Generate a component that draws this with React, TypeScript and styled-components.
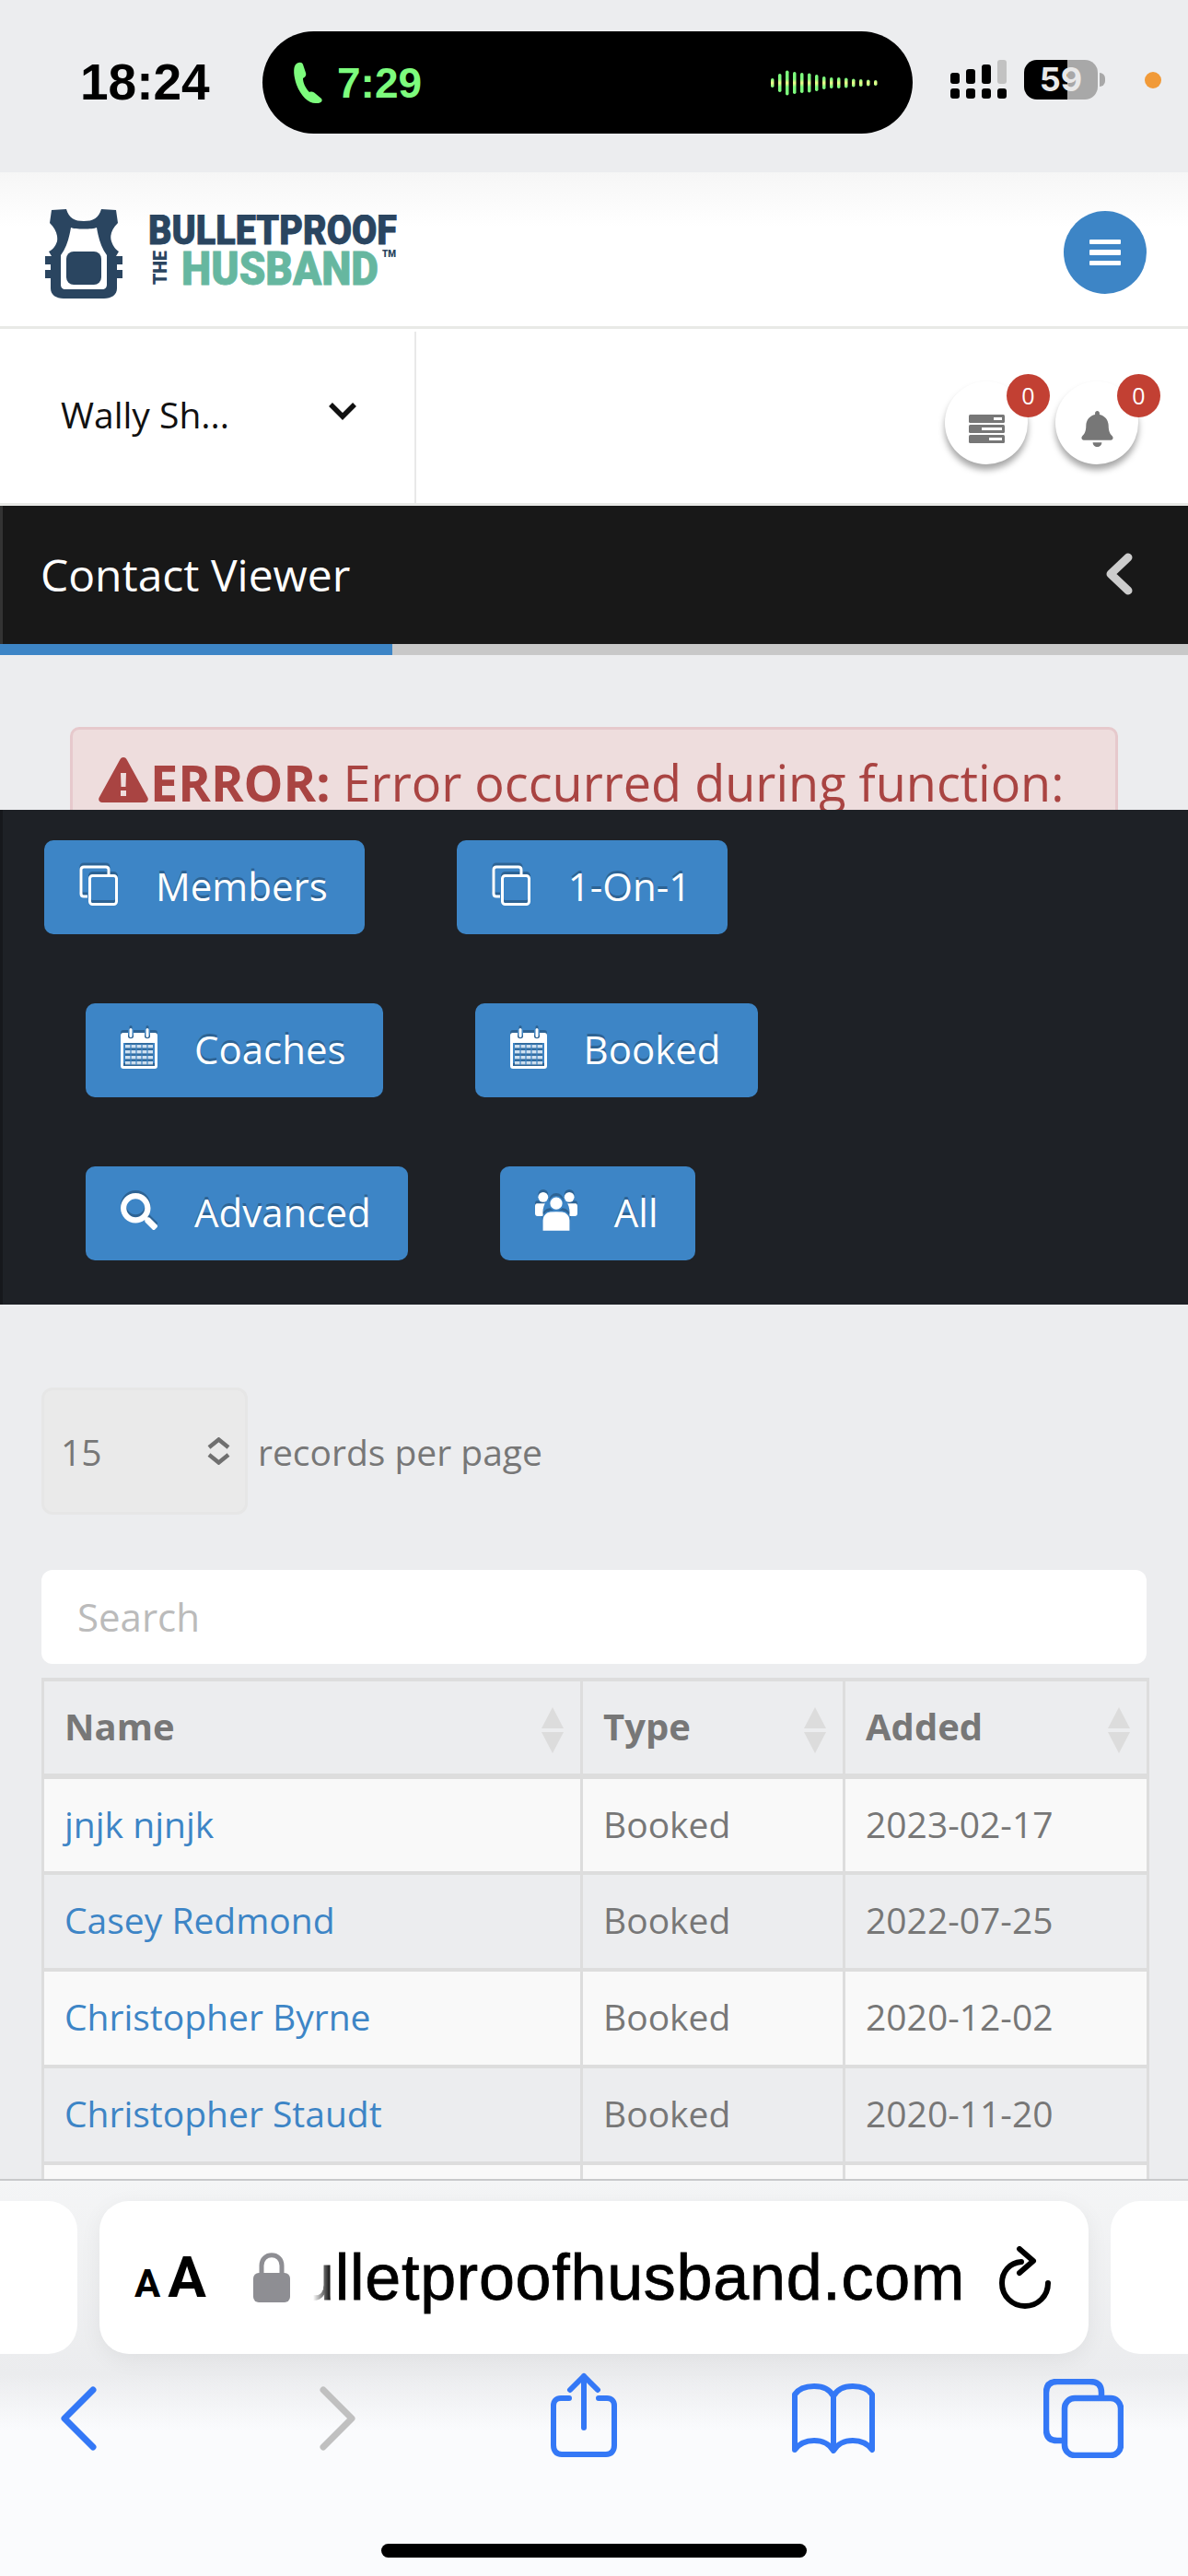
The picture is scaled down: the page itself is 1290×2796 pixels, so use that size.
import React from 'react';
import styled, { createGlobalStyle } from 'styled-components';
import { FaBell, FaSearch } from 'react-icons/fa';

const GlobalStyle = createGlobalStyle`
  html, body { margin: 0; padding: 0; background: #ecedef; }
  * { box-sizing: border-box; }
`;

const Page = styled.div`
  width: 1290px;
  height: 2796px;
  display: flex;
  flex-direction: column;
  overflow: hidden;
  background: #ecedef;
  font-family: 'Open Sans', 'Liberation Sans', sans-serif;
`;

/* ---- iOS status bar ---- */
const StatusBar = styled.div`
  height: 187px;
  flex: none;
  display: flex;
  align-items: flex-start;
  padding: 34px 0 0 87px;
  font-family: 'Liberation Sans', Arial, sans-serif;
`;
const Clock = styled.div`
  width: 198px;
  margin-top: 26px;
  font-size: 55px;
  line-height: 58px;
  font-weight: 700;
  color: #000;
`;
const Island = styled.div`
  width: 706px;
  height: 111px;
  border-radius: 56px;
  background: #000;
  display: flex;
  align-items: center;
  padding: 0 38px 0 33px;
  color: #7dfc7d;
`;
const CallTime = styled.span`
  margin-left: 14px;
  font-size: 46px;
  font-weight: 700;
  flex: 1;
`;
const Signal = styled.div`
  margin: 31px 0 0 41px;
  flex: none;
  height: 43px;
  svg { display: block; }
`;
const Battery = styled.div`
  position: relative;
  margin: 31px 0 0 18px;
  width: 80px;
  height: 43px;
  border-radius: 14px;
  background: linear-gradient(90deg, #000 0 47px, #a8a8a8 47px);
  color: #e9e9e9;
  font-size: 36px;
  line-height: 43px;
  font-weight: 700;
  text-align: center;
  font-family: 'Inter', 'Liberation Sans', sans-serif;
  &::after {
    content: '';
    position: absolute;
    left: 82px;
    top: 14px;
    width: 6px;
    height: 15px;
    border-radius: 0 8px 8px 0;
    background: #a8a8a8;
  }
`;
const OrangeDot = styled.div`
  margin: 44px 0 0 51px;
  width: 18px;
  height: 18px;
  border-radius: 50%;
  background: #f19a38;
`;

/* ---- site header ---- */
const Header = styled.header`
  height: 170px;
  flex: none;
  display: flex;
  align-items: flex-start;
  justify-content: space-between;
  padding: 40px 45px 0 48px;
  background: linear-gradient(#f6f6f6, #fff 60px);
  border-bottom: 3px solid #e8e9e6;
`;
const MenuButton = styled.div`
  width: 90px;
  height: 90px;
  margin-top: 2px;
  border-radius: 50%;
  background: #3d85c6;
  display: flex;
  flex-direction: column;
  align-items: center;
  justify-content: center;
  gap: 6px;
  span {
    width: 34px;
    height: 5.5px;
    border-radius: 1px;
    background: #fff;
  }
`;

const SubNav = styled.div`
  height: 192px;
  flex: none;
  display: flex;
  background: #fff;
  border-bottom: 3px solid #e8e9e6;
  padding-top: 3px;
`;
const UserMenu = styled.div`
  width: 452px;
  border-right: 2px solid #e9e9e9;
  display: flex;
  align-items: flex-start;
  padding: 64px 0 0 66px;
  font-size: 39px;
  line-height: 52px;
  color: #111;
  span { width: 291px; }
  svg { margin-top: 12px; }
`;
const Notices = styled.div`
  flex: 1;
  display: flex;
  justify-content: flex-end;
  gap: 30px;
  padding: 54px 54px 0 0;
`;
const RoundIcon = styled.div`
  position: relative;
  width: 90px;
  height: 90px;
  border-radius: 50%;
  background: #fff;
  box-shadow: 0 6px 7px rgba(0, 0, 0, 0.35);
  display: flex;
  align-items: center;
  justify-content: center;
  color: #777;
  padding-top: 12px;
`;
const Badge = styled.span`
  position: absolute;
  left: 67px;
  top: -8px;
  width: 47px;
  height: 47px;
  border-radius: 50%;
  background: #c24033;
  color: #fff;
  font-size: 25px;
  line-height: 47px;
  text-align: center;
`;

/* ---- page title ---- */
const TitleBar = styled.div`
  height: 150px;
  flex: none;
  display: flex;
  align-items: center;
  justify-content: space-between;
  padding: 0 60px 2px 41px;
  background: #181818;
  border-left: 3px solid #333;
  color: #fff;
  font-size: 48px;
`;
const Progress = styled.div`
  height: 12px;
  flex: none;
  background: #c8c8c8;
  div { height: 100%; background: #3d85c6; }
`;

const AlertArea = styled.div`
  height: 168px;
  flex: none;
  overflow: hidden;
  padding: 78px 76px 0;
`;
const Alert = styled.div`
  height: 140px;
  padding: 22px 26px;
  display: flex;
  align-items: flex-start;
  border: 3px solid #e6c9cc;
  border-radius: 10px;
  background: #eedddd;
  color: #a94442;
  font-size: 54px;
  line-height: 70px;
  white-space: nowrap;
  b { margin-right: 14px; }
  svg { flex: none; margin: 8px 2px 0 2px; }
`;

/* ---- dark button panel ---- */
const ButtonPanel = styled.div`
  height: 537px;
  flex: none;
  padding-top: 33px;
  display: flex;
  flex-direction: column;
  gap: 75px;
  background: #1e2126;
  border-left: 3px solid #16181c;
`;
const ButtonRow = styled.div<{ $indent: number }>`
  display: flex;
  gap: 100px;
  padding-left: ${({ $indent }) => $indent}px;
`;
const ActionButton = styled.div`
  height: 102px;
  display: flex;
  align-items: center;
  gap: 40px;
  padding: 0 40px 4px 38px;
  border-radius: 10px;
  background: #3d85c6;
  color: #fff;
  font-size: 42px;
  text-shadow: 0 -3px 0 rgba(0, 0, 0, 0.25);
  svg { flex: none; filter: drop-shadow(0 -3px 0 rgba(0, 0, 0, 0.25)); }
`;

/* ---- contacts table ---- */
const Main = styled.main`
  flex: 1;
  min-height: 0;
  overflow: hidden;
  padding: 90px 42px 0 45px;
  color: #777;
  font-size: 39px;
`;
const LengthRow = styled.div`
  display: flex;
  align-items: center;
  gap: 11px;
`;
const PageSize = styled.div`
  width: 224px;
  height: 138px;
  display: flex;
  align-items: center;
  justify-content: space-between;
  padding: 0 15px 0 18px;
  border: 3px solid #e6e6e6;
  border-radius: 12px;
  background: #eaeaea;
`;
const SearchBox = styled.div`
  height: 102px;
  margin: 60px 3px 15px 0;
  padding: 0 39px 2px;
  display: flex;
  align-items: center;
  border-radius: 12px;
  background: #fff;
  color: #bbb;
  font-size: 42px;
`;
const Table = styled.table`
  width: 1203px;
  table-layout: fixed;
  border-collapse: collapse;
  border: 3px solid #ddd;
  border-top-width: 4px;
`;
const Th = styled.th`
  position: relative;
  height: 105px;
  padding: 0 0 4px 22px;
  border: 3px solid #ddd;
  border-bottom-width: 6px;
  text-align: left;
  font-size: 40px;
  font-weight: 700;
  color: #777;
  &::before,
  &::after {
    content: '';
    position: absolute;
    right: 18px;
    border-left: 12px solid transparent;
    border-right: 12px solid transparent;
  }
  &::before { top: 28px; border-bottom: 23px solid #dcdcdc; }
  &::after { top: 55px; border-top: 23px solid #dcdcdc; }
`;
const Tr = styled.tr<{ $odd: boolean }>`
  background: ${({ $odd }) => ($odd ? '#f9f9f9' : '#ecedef')};
`;
const Td = styled.td`
  height: 105px;
  padding: 0 0 4px 22px;
  border: 3px solid #ddd;
  border-bottom-width: 4px;
  a { color: #3d85c6; text-decoration: none; }
`;

/* ---- Safari toolbar ---- */
const Toolbar = styled.div`
  height: 431px;
  flex: none;
  position: relative;
  border-top: 2px solid #c8c9cb;
  background: linear-gradient(#f4f5f6, #ebecee 210px, #fafbfd 270px);
  font-family: 'Liberation Sans', Arial, sans-serif;
`;
const Tabs = styled.div`
  height: 166px;
  margin-top: 22px;
  display: flex;
  gap: 24px;
  margin-left: -60px;
`;
const SideTab = styled.div`
  width: 144px;
  flex: none;
  border-radius: 32px;
  background: #fff;
`;
const AddressBar = styled.div`
  width: 1074px;
  flex: none;
  display: flex;
  align-items: center;
  padding: 0 41px 0 38px;
  border-radius: 32px;
  background: #fff;
  box-shadow: 0 6px 24px rgba(0, 0, 0, 0.06);
  color: #000;
`;
const FontToggle = styled.div`
  width: 129px;
  font-family: 'Roboto', 'Liberation Sans', sans-serif;
  font-weight: 700;
  font-size: 62px;
  line-height: 1;
  small { font-size: 42px; margin-right: 8px; }
`;
const Url = styled.div`
  width: 708px;
  margin-left: 25px;
  margin-right: 37px;
  overflow: hidden;
  display: flex;
  justify-content: flex-end;
  white-space: nowrap;
  font-size: 70px;
  line-height: 82px;
  letter-spacing: 0.75px;
  -webkit-text-stroke: 0.8px #000;
  mask-image: linear-gradient(90deg, transparent 0, #000 20px);
`;
const NavIcons = styled.div`
  display: grid;
  grid-template-columns: 282px 251px 262px 273px auto;
  align-items: center;
  height: 115px;
  padding-left: 65px;
  margin-top: 12px;
  svg:nth-child(3) { margin-bottom: 8px; }
`;
const HomeBar = styled.div`
  position: absolute;
  left: 414px;
  bottom: 20px;
  width: 462px;
  height: 15px;
  border-radius: 8px;
  background: #000;
`;

/* ---- drawn icons ---- */
const Vest = () => (
  <svg width="86" height="98" viewBox="0 0 86 98">
    <path
      fill="#2a4560"
      fillRule="evenodd"
      d="M8 1 L24 0 C27 10 33 13 43 13 C53 13 59 10 62 0 L78 1 L80 15 C73 22 71 29 73 35 C75 41 78 44 81 46 L78 51 L85 51 L85 60 L79 60 L79 66 L85 66 L85 75 L79 75 L79 86 C79 93 73 97 65 97 L21 97 C13 97 7 93 7 86 L7 75 L1 75 L1 66 L7 66 L7 60 L1 60 L1 51 L8 51 L5 46 C9 44 12 41 14 35 C15 29 13 22 6 15 Z M29 20 C33 22 53 22 57 20 C59 32 62 42 68 50 L68 82 C68 85 66 87 63 87 L23 87 C20 87 18 85 18 82 L18 50 C24 42 27 32 29 20 Z"
    />
    <rect x="24" y="46" width="38" height="36" rx="8" fill="#2a4560" />
  </svg>
);

const Wordmark = () => (
  <svg width="274" height="84" viewBox="0 0 274 84" fontFamily="Roboto, sans-serif" fontWeight="900">
    <text x="0" y="32" fontSize="45" fill="#2a4560" stroke="#2a4560" strokeWidth="0.8" textLength="270" lengthAdjust="spacingAndGlyphs">
      BULLETPROOF
    </text>
    <text x="36" y="76" fontSize="50" fill="#66b7a0" stroke="#66b7a0" strokeWidth="0.8" textLength="214" lengthAdjust="spacingAndGlyphs">
      HUSBAND
    </text>
    <text
      transform="translate(20 76) rotate(-90)"
      fontSize="21"
      fill="#2a4560"
      textLength="37"
      lengthAdjust="spacingAndGlyphs"
    >
      THE
    </text>
    <text x="254" y="46" fontSize="10" fill="#2a4560">
      TM
    </text>
  </svg>
);

const Logo = styled.div`
  display: flex;
  gap: 27px;
  align-items: flex-start;
  svg:last-child { margin-top: 6px; }
`;

const PhoneIcon = () => (
  <svg width="34" height="46" viewBox="0 0 34 46" fill="#7dfc7d">
    <path d="M3 3 C6 0 10 0 11 3 L14 12 C15 15 13 17 11 18 C11 23 14 29 18 33 C21 32 23 33 25 35 L31 40 C33 43 30 45 26 45 C18 46 9 38 4 25 C1 16 0 7 3 3 Z" />
  </svg>
);

const WAVE = [10, 20, 27, 24, 22, 21, 18, 14, 12, 12, 11, 9, 8, 7, 6];

const Waveform = () => (
  <svg width="116" height="30" viewBox="0 0 116 30">
    <defs>
      <linearGradient id="wave" x1="0" y1="0" x2="0" y2="30" gradientUnits="userSpaceOnUse">
        <stop offset="0.36" stopColor="#7dfc7d" />
        <stop offset="0.5" stopColor="#f4fb8a" />
        <stop offset="0.64" stopColor="#7dfc7d" />
      </linearGradient>
    </defs>
    {WAVE.map((h, i) => (
      <rect key={i} x={i * 8} y={15 - h / 2} width="3.5" height={h} rx="1.75" fill="url(#wave)" />
    ))}
  </svg>
);

const SignalBars = () => (
  <svg width="62" height="43" viewBox="0 0 62 43">
    <rect x="0" y="14" width="10" height="12" rx="3" />
    <rect x="17" y="10" width="10" height="16" rx="3" />
    <rect x="34" y="5" width="10" height="21" rx="3" />
    <rect x="51" y="0" width="10" height="26" rx="3" fill="#c2c2c2" />
    {[0, 17, 34, 51].map((x) => (
      <rect key={x} x={x} y="31" width="10" height="11" rx="3" />
    ))}
  </svg>
);

const Chevron = () => (
  <svg width="30" height="20" viewBox="0 0 30 20" fill="none" stroke="#111" strokeWidth="5.5">
    <path d="M2 3 L15 16 L28 3" />
  </svg>
);

const CollapseIcon = () => (
  <svg width="30" height="46" viewBox="0 0 30 46" fill="none" stroke="#ccc" strokeWidth="9" strokeLinecap="round" strokeLinejoin="round">
    <path d="M25 5 L6 23 L25 41" />
  </svg>
);

const ServerIcon = () => (
  <svg width="39" height="31" viewBox="0 0 39 31">
    {[0, 11, 22].map((y, i) => (
      <g key={y}>
        <rect y={y} width="39" height="9" rx="1.5" fill="#777" />
        <rect x={[27, 14, 22][i]} y={y + 3} width={[9, 22, 14][i]} height="3" fill="#fff" />
      </g>
    ))}
  </svg>
);

const WarnIcon = () => (
  <svg width="54" height="50" viewBox="0 0 54 50">
    <path
      fill="#a94442"
      fillRule="evenodd"
      d="M27 0 C29 0 30 1 31 3 L53 43 C55 46 53 49 50 49 L4 49 C1 49 -1 46 1 43 L23 3 C24 1 25 0 27 0 Z M24 17 L24.5 32 L29.5 32 L30 17 Z M24 36 L24 42 L30 42 L30 36 Z"
    />
  </svg>
);

const CopyIcon = () => (
  <svg width="43" height="44" viewBox="0 0 43 44" fill="none" stroke="#fff" strokeWidth="3">
    <path d="M9 34 H5 C3 34 2 33 2 31 V5 C2 3 3 2 5 2 H29 C31 2 32 3 32 5 V11" />
    <rect x="11.5" y="11.5" width="29" height="31" rx="3" />
  </svg>
);

const CalendarIcon = () => (
  <svg width="40" height="44" viewBox="0 0 40 44">
    <path
      fill="#fff"
      fillRule="evenodd"
      d="M3 5 H8 V9 C8 12 14 12 14 9 V5 H26 V9 C26 12 32 12 32 9 V5 H37 C39 5 40 6 40 8 V41 C40 43 39 44 37 44 H3 C1 44 0 43 0 41 V8 C0 6 1 5 3 5 Z M3 16 V41 H37 V16 Z"
    />
    <rect x="9.5" y="0" width="3" height="10" rx="1.5" fill="#fff" />
    <rect x="27.5" y="0" width="3" height="10" rx="1.5" fill="#fff" />
    {[18, 24, 30, 36].map((y) => (
      <rect key={y} x="5" y={y} width="30" height="3.4" fill="#fff" opacity="0.75" />
    ))}
    {[10, 16, 22, 28].map((x) => (
      <rect key={x} x={x} y="17" width="2" height="23" fill="#3d85c6" opacity="0.6" />
    ))}
  </svg>
);

const UsersIcon = () => (
  <svg width="46" height="44" viewBox="0 0 47 44" fill="#fff">
    <circle cx="9" cy="6" r="5.5" />
    <circle cx="38" cy="6" r="5.5" />
    <path d="M2 13 H11 C9 17 8 22 9 27 H3 C1 27 0 26 0 24 V16 C0 14 1 13 2 13 Z" />
    <path d="M45 13 H36 C38 17 39 22 38 27 H44 C46 27 47 26 47 24 V16 C47 14 46 13 45 13 Z" />
    <circle cx="23.5" cy="13" r="7.5" stroke="#3d85c6" strokeWidth="1.5" />
    <path d="M13 23 C16 21 31 21 34 23 C37 25 39 28 39 32 V44 H8 V32 C8 28 10 25 13 23 Z" stroke="#3d85c6" strokeWidth="1.5" />
  </svg>
);

const UpDown = () => (
  <svg width="27" height="30" viewBox="0 0 27 30" fill="none" stroke="#707070" strokeWidth="4.5">
    <path d="M3 11 L13.5 2.5 L24 11 M3 19 L13.5 27.5 L24 19" />
  </svg>
);

const LockIcon = () => (
  <svg width="40" height="54" viewBox="0 0 40 54" style={{ flex: 'none' }}>
    <path d="M9 24 V14 C9 -1 31 -1 31 14 V24" fill="none" stroke="#8e8e93" strokeWidth="5" />
    <rect y="22" width="40" height="32" rx="6" fill="#8e8e93" />
  </svg>
);

const ReloadIcon = () => (
  <svg width="56" height="68" viewBox="0 0 56 68" fill="none" stroke="#000" strokeWidth="6" strokeLinecap="round" strokeLinejoin="round" style={{ flex: 'none' }}>
    <path d="M24 17 C11 18 3 28 3 40 C3 54 14 65 28 65 C42 65 53 54 53 40" />
    <path d="M22 3 L37 16 L22 29" />
  </svg>
);

const TOOL_BLUE = '#3478f6';

const BackIcon = ({ color }: { color: string }) => (
  <svg width="40" height="70" viewBox="0 0 40 70" fill="none" stroke={color} strokeWidth="7" strokeLinecap="round" strokeLinejoin="round">
    <path d="M36 4 L5 35 L36 66" />
  </svg>
);

const ForwardIcon = ({ color }: { color: string }) => (
  <svg width="40" height="70" viewBox="0 0 40 70" fill="none" stroke={color} strokeWidth="7" strokeLinecap="round" strokeLinejoin="round">
    <path d="M4 4 L35 35 L4 66" />
  </svg>
);

const ShareIcon = () => (
  <svg width="72" height="92" viewBox="0 0 72 92" fill="none" stroke={TOOL_BLUE} strokeWidth="6" strokeLinecap="round" strokeLinejoin="round">
    <path d="M20 28 H11 C6 28 3 31 3 36 V79 C3 85 6 89 12 89 H60 C66 89 69 85 69 79 V36 C69 31 66 28 61 28 H52" />
    <path d="M36 60 V4 M21 19 L36 4 L51 19" />
  </svg>
);

const BookIcon = () => (
  <svg width="90" height="76" viewBox="0 0 90 76" fill="none" stroke={TOOL_BLUE} strokeWidth="6" strokeLinejoin="round">
    <path d="M45 14 C41 6 33 3 24 3 C15 3 7 6 3 12 V72 C8 65 16 62 24 62 C33 62 41 66 45 73 C49 66 57 62 66 62 C74 62 82 65 87 72 V12 C83 6 75 3 66 3 C57 3 49 6 45 14 Z M45 14 V73" />
  </svg>
);

const TabsIcon = () => (
  <svg width="87" height="86" viewBox="0 0 87 86" fill="none" stroke={TOOL_BLUE} strokeWidth="6.5">
    <path d="M20 67 H15 C7 67 3 63 3 55 V15 C3 7 7 3 15 3 H50 C59 3 63 7 63 15 V20" />
    <rect x="23" y="21" width="61" height="62" rx="11" />
  </svg>
);

const ROWS = [
  { name: 'jnjk njnjk', type: 'Booked', added: '2023-02-17' },
  { name: 'Casey Redmond', type: 'Booked', added: '2022-07-25' },
  { name: 'Christopher Byrne', type: 'Booked', added: '2020-12-02' },
  { name: 'Christopher Staudt', type: 'Booked', added: '2020-11-20' },
  { name: '', type: '', added: '' },
];

const BUTTON_ROWS = [
  {
    indent: 45,
    items: [
      { label: 'Members', icon: <CopyIcon /> },
      { label: '1-On-1', icon: <CopyIcon /> },
    ],
  },
  {
    indent: 90,
    items: [
      { label: 'Coaches', icon: <CalendarIcon /> },
      { label: 'Booked', icon: <CalendarIcon /> },
    ],
  },
  {
    indent: 90,
    items: [
      { label: 'Advanced', icon: <FaSearch size={40} /> },
      { label: 'All', icon: <UsersIcon /> },
    ],
  },
];

const App = () => {
  return (
    <Page>
      <GlobalStyle />
      <StatusBar>
        <Clock>18:24</Clock>
        <Island>
          <PhoneIcon />
          <CallTime>7:29</CallTime>
          <Waveform />
        </Island>
        <Signal>
          <SignalBars />
        </Signal>
        <Battery>59</Battery>
        <OrangeDot />
      </StatusBar>

      <Header>
        <Logo>
          <Vest />
          <Wordmark />
        </Logo>
        <MenuButton>
          <span />
          <span />
          <span />
        </MenuButton>
      </Header>

      <SubNav>
        <UserMenu>
          <span>Wally Sh...</span>
          <Chevron />
        </UserMenu>
        <Notices>
          <RoundIcon>
            <ServerIcon />
            <Badge>0</Badge>
          </RoundIcon>
          <RoundIcon>
            <FaBell size={39} />
            <Badge>0</Badge>
          </RoundIcon>
        </Notices>
      </SubNav>

      <TitleBar>
        <span>Contact Viewer</span>
        <CollapseIcon />
      </TitleBar>
      <Progress>
        <div style={{ width: `${(426 / 1290) * 100}%` }} />
      </Progress>

      <AlertArea>
        <Alert>
          <WarnIcon />
          <b>ERROR:</b>
          <span>Error occurred during function:</span>
        </Alert>
      </AlertArea>

      <ButtonPanel>
        {BUTTON_ROWS.map((row) => (
          <ButtonRow key={row.items[0].label} $indent={row.indent}>
            {row.items.map((item) => (
              <ActionButton key={item.label}>
                {item.icon}
                <span>{item.label}</span>
              </ActionButton>
            ))}
          </ButtonRow>
        ))}
      </ButtonPanel>

      <Main>
        <LengthRow>
          <PageSize>
            <span>15</span>
            <UpDown />
          </PageSize>
          <span>records per page</span>
        </LengthRow>
        <SearchBox>Search</SearchBox>
        <Table>
          <colgroup>
            <col style={{ width: 585 }} />
            <col style={{ width: 285 }} />
            <col />
          </colgroup>
          <thead>
            <tr>
              <Th>Name</Th>
              <Th>Type</Th>
              <Th>Added</Th>
            </tr>
          </thead>
          <tbody>
            {ROWS.map((row, i) => (
              <Tr key={i} $odd={i % 2 === 0}>
                <Td>
                  <a href="#contact">{row.name}</a>
                </Td>
                <Td>{row.type}</Td>
                <Td>{row.added}</Td>
              </Tr>
            ))}
          </tbody>
        </Table>
      </Main>

      <Toolbar>
        <Tabs>
          <SideTab />
          <AddressBar>
            <FontToggle>
              <small>A</small>A
            </FontToggle>
            <LockIcon />
            <Url>bulletproofhusband.com</Url>
            <ReloadIcon />
          </AddressBar>
          <SideTab />
        </Tabs>
        <NavIcons>
          <BackIcon color={TOOL_BLUE} />
          <ForwardIcon color="#c0c0c0" />
          <ShareIcon />
          <BookIcon />
          <TabsIcon />
        </NavIcons>
        <HomeBar />
      </Toolbar>
    </Page>
  );
};

export default App;
